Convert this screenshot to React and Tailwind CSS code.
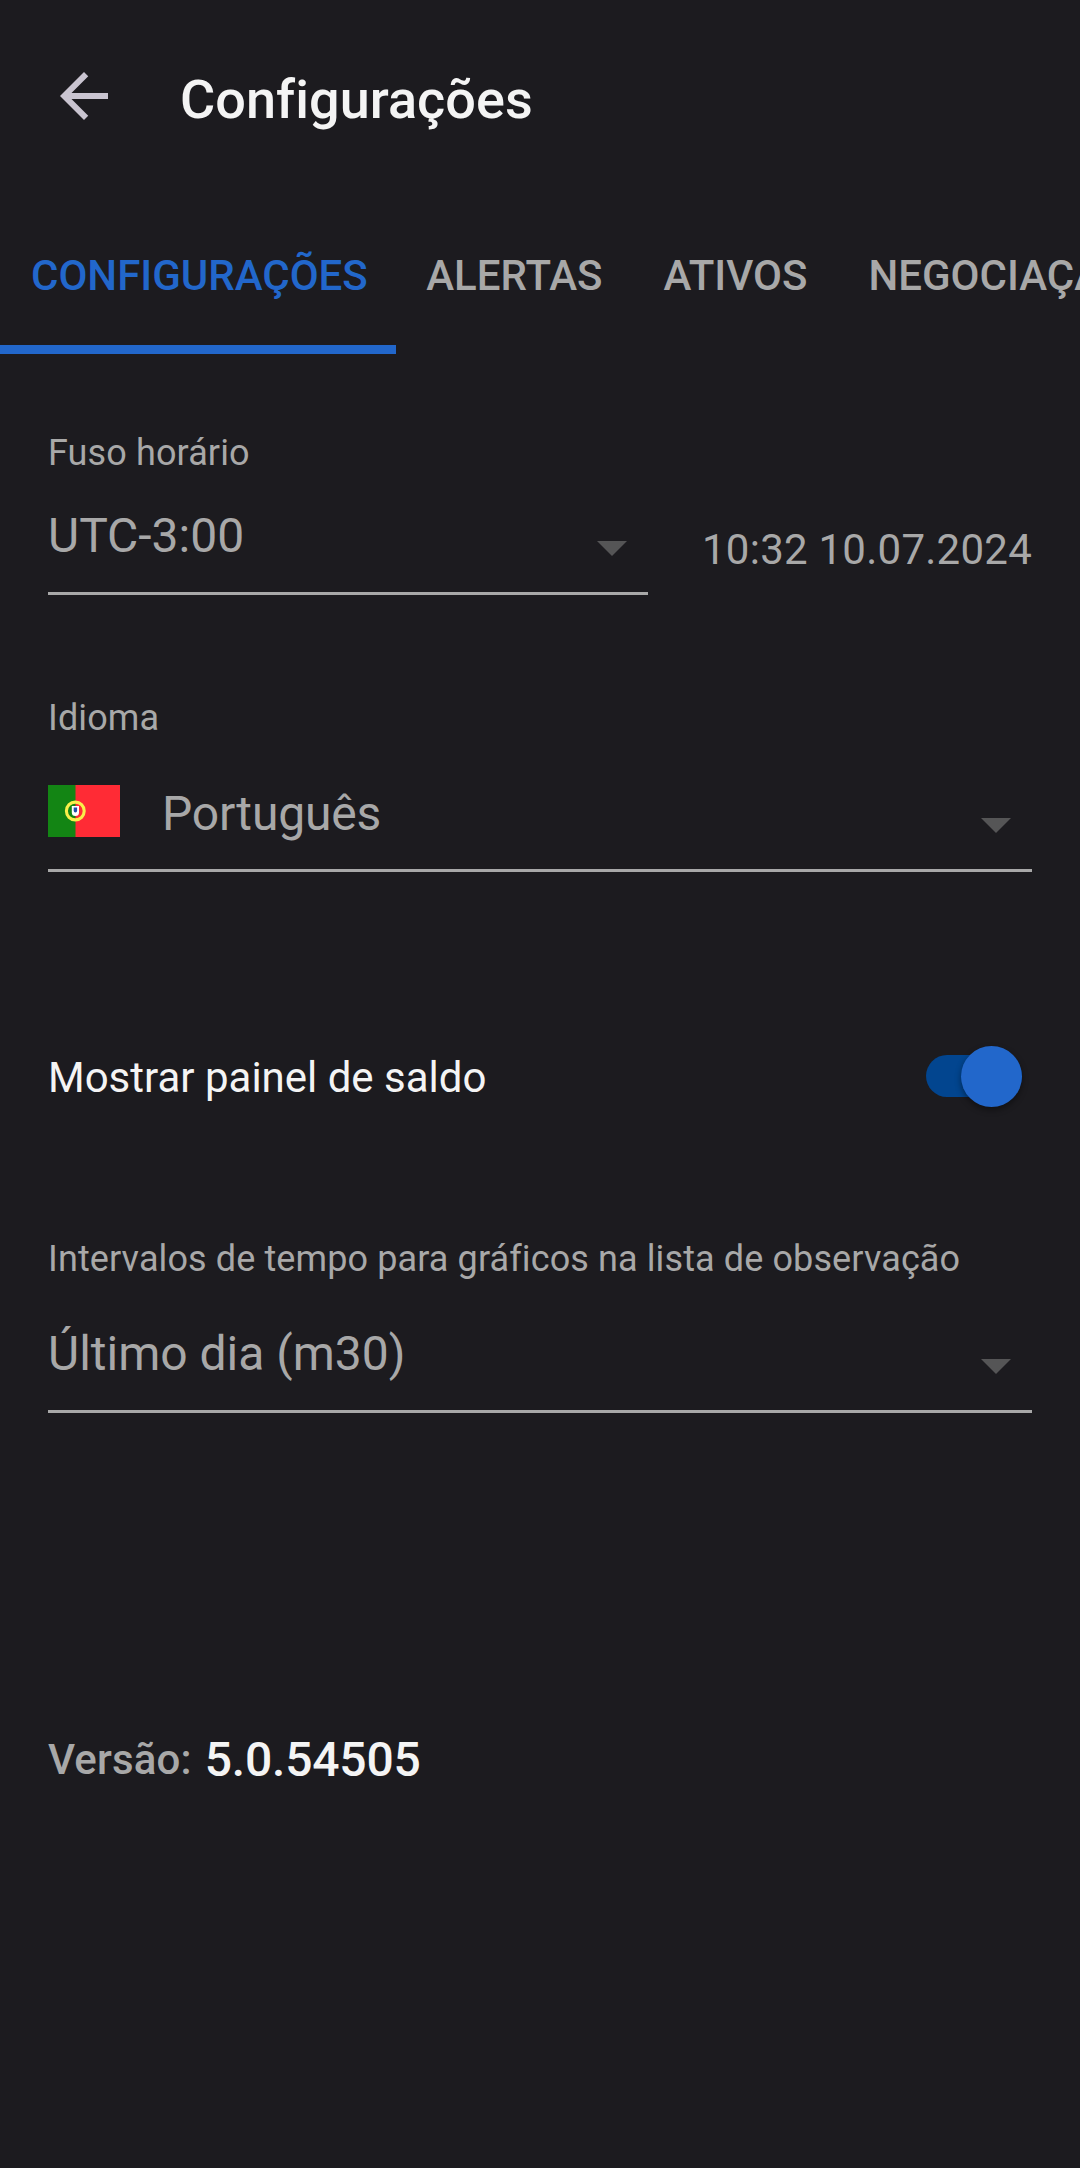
import { useState } from "react";

const TABS = ["CONFIGURAÇÕES", "ALERTAS", "ATIVOS", "NEGOCIAÇÃO"];

function Caret() {
  return (
    <svg width="30" height="15" viewBox="0 0 30 15" className="mb-2 shrink-0 fill-[#555556]">
      <path d="M0 0h30L15 15z" />
    </svg>
  );
}

function Flag() {
  return (
    <svg width="72" height="52" viewBox="0 0 72 52" className="mb-1 shrink-0">
      <path fill="#ff2b35" d="M0 0h72v52H0z" />
      <path fill="#138514" d="M0 0h27.5v52H0z" />
      <circle cx="27.3" cy="26" r="8.9" fill="none" stroke="#f9ef4a" strokeWidth="3.1" />
      <path fill="#fff" d="M23.800 21h7.200v6.500a3.600 3.600 0 0 1-7.200 0z" />
      <path fill="#2250a8" d="M25.700 22.500h3.400v3.300a1.700 1.700 0 0 1-3.400 0z" />
    </svg>
  );
}

export default function App() {
  const [tab, setTab] = useState("CONFIGURAÇÕES");
  const [showBalance, setShowBalance] = useState(true);

  return (
    <div className="h-[2168px] w-[1080px] overflow-hidden bg-[#1c1b1f] font-[Roboto,sans-serif] text-[#a8a8a8]">
      <header className="flex h-[200px] items-center gap-[60px] pl-12">
        <button aria-label="Voltar" className="-mt-2">
          <svg width="72" height="72" viewBox="0 0 24 24" className="fill-[#c9c4d0]">
            <path d="M20 11H7.830l5.590-5.590L12 4l-8 8 8 8 1.410-1.410L7.830 13H20z" />
          </svg>
        </button>
        <h1 className="text-[54px] leading-[64px] font-medium tracking-[0.05px] text-[#f4f4f4]">Configurações</h1>
      </header>

      <nav className="flex h-[154px] overflow-hidden">
        {TABS.map((name) => (
          <button
            key={name}
            onClick={() => setTab(name)}
            className={`shrink-0 border-b-[9px] px-[30.5px] pt-[6px] text-[42px] font-medium first:pr-[28px] first:pl-[31px] ${name === tab ? "border-[#2267cb] text-[#2267cb]" : "border-transparent"}`}
          >
            {name}
          </button>
        ))}
      </nav>

      <main className="px-12">
        <section className="flex items-start justify-between pt-[77px]">
          <div className="w-[600px]">
            <p className="text-[36px] leading-[44px] tracking-[0.11px]">Fuso horário</p>
            <div className="flex h-[120px] items-end justify-between border-b-[3px] border-[#a8a8a8] pr-[21px] pb-7">
              <span className="text-[48px] leading-[56px]">UTC-3:00</span>
              <Caret />
            </div>
          </div>
          <time className="pt-[93px] text-[42px] leading-[52px] tracking-[0.25px]">10:32 10.07.2024</time>
        </section>

        <section className="pt-[101px]">
          <p className="text-[36px] leading-[44px] tracking-[0.11px]">Idioma</p>
          <div className="flex h-[132px] items-end border-b-[3px] border-[#a8a8a8] pr-[21px] pb-7">
            <Flag />
            <span className="-mb-px ml-[42px] grow text-[48px] leading-[56px] tracking-[-0.15px]">Português</span>
            <Caret />
          </div>
        </section>

        <section className="mt-[154px] flex h-[100px] items-center justify-between pr-[10px]">
          <span className="pt-[3px] text-[42px] text-[#f4f4f4]">Mostrar painel de saldo</span>
          <button
            role="switch"
            aria-checked={showBalance}
            onClick={() => setShowBalance(!showBalance)}
            className={`flex h-[42px] w-[96px] items-center rounded-full bg-[#02458f] ${showBalance ? "justify-end" : "justify-start"}`}
          >
            <span className="size-[61px] shrink-0 rounded-full bg-[#2267cb] shadow-[0_3px_6px_rgba(0,0,0,0.4)]" />
          </button>
        </section>

        <section className="pt-[111px]">
          <p className="text-[36px] leading-[44px] tracking-[0.11px]">Intervalos de tempo para gráficos na lista de observação</p>
          <div className="flex h-[132px] items-end justify-between border-b-[3px] border-[#a8a8a8] pr-[21px] pb-7">
            <span className="text-[48px] leading-[56px]">Último dia (m30)</span>
            <Caret />
          </div>
        </section>

        <footer className="flex items-start gap-[13px] pt-[311px] font-medium">
          <span className="pt-1 text-[42px] tracking-[0.15px]">Versão:</span>
          <span className="text-[48px] tracking-[-0.2px] text-[#f4f4f4]">5.0.54505</span>
        </footer>
      </main>
    </div>
  );
}
